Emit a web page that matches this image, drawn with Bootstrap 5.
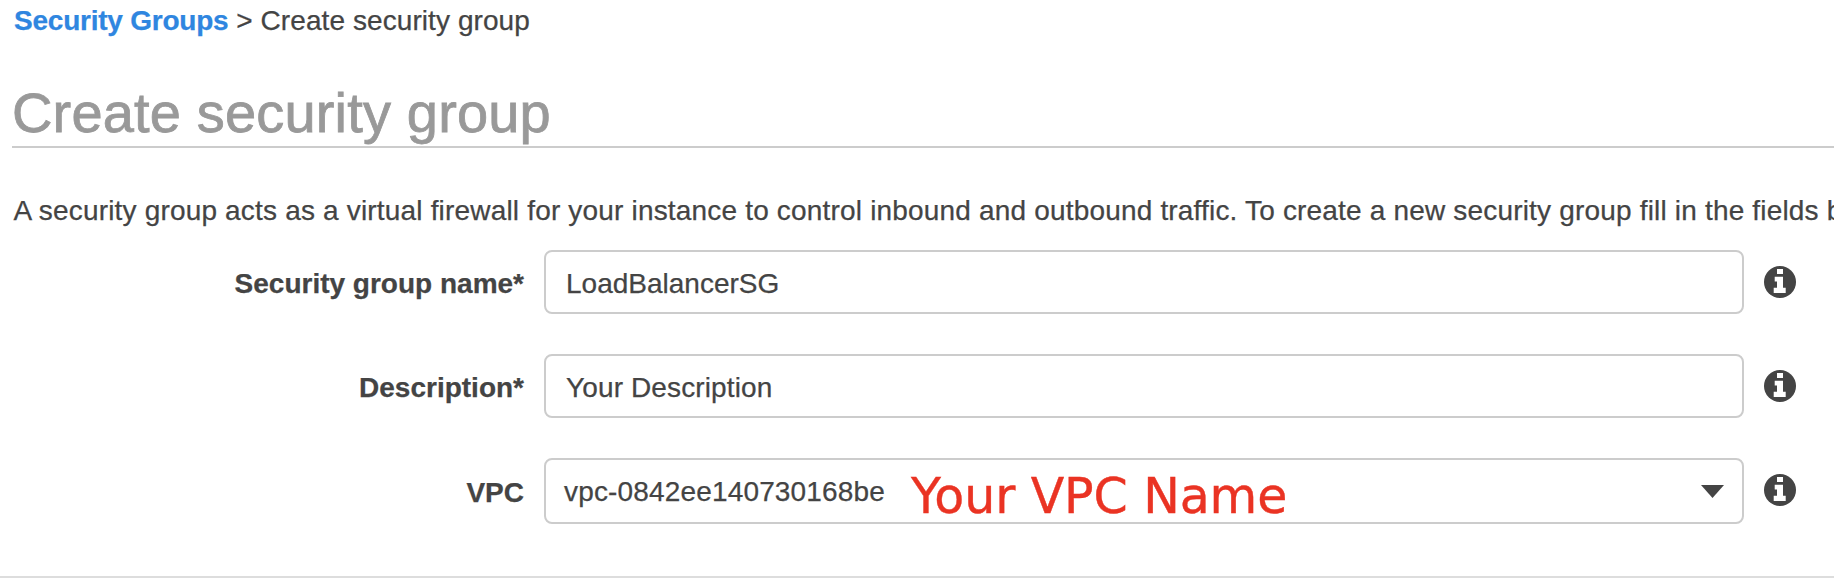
<!DOCTYPE html>
<html lang="en">
<head>
<meta charset="utf-8">
<meta name="viewport" content="width=device-width, initial-scale=1">
<title>Create security group</title>
<link href="https://cdn.jsdelivr.net/npm/bootstrap@5.3.0/dist/css/bootstrap.min.css" rel="stylesheet">
<style>
body{font-family:"Liberation Sans",Arial,sans-serif;font-size:28px;line-height:32px;color:#444;background:#fff;overflow:hidden;-webkit-text-stroke:.25px}
.page{height:578px;border-bottom:2px solid #ddd;padding-left:12px}
.crumbs{padding:5px 0 0 2px;height:76px;white-space:nowrap;letter-spacing:.08px}
.crumbs a{color:#2f86e0;letter-spacing:-.23px}
.title{height:72px;font-size:56px;line-height:64px;padding-top:5px;color:#999;border-bottom:2px solid #ccc;letter-spacing:.17px;-webkit-text-stroke:.8px}
.intro{height:102px;padding:47px 0 0 1.5px;white-space:nowrap;letter-spacing:.18px}
.fields{display:grid;gap:40px}
.field-row{display:grid;grid-template-columns:512px 1200px 32px;column-gap:20px;align-items:center}
.field-name{padding-top:3px;font-weight:700;text-align:right}
.form-control,.form-control:focus{height:64px;border:2px solid #ccc;border-radius:8px;padding:3px 20px 0;font-size:28px;line-height:32px;color:#444;box-shadow:none}
#desc{letter-spacing:.13px}
.vpc-box.form-control{height:66px;padding:1px 18px}
.vpc-id{letter-spacing:.16px;padding-top:1px}
.note{font-family:"DejaVu Sans",Verdana,sans-serif;font-size:49px;line-height:50px;color:#ea3323;letter-spacing:-.1px;padding-top:12px;margin-left:26px;-webkit-text-stroke:.4px}
.vpc-info{margin-bottom:2px}
svg{display:block}
</style>
</head>
<body>
<svg class="d-none">
  <symbol id="info" viewBox="0 0 32 32"><circle cx="16" cy="16" r="16" fill="#444"/><path fill="#fff" d="M13 3h6v5h-6zM10.700 10.700h8.300v11h2.700v5.300h-12v-5.300h3.300v-6.300h-2.300z"/></symbol>
</svg>
<main class="page">
  <nav class="crumbs"><a href="#" class="fw-bold text-decoration-none">Security Groups</a> &gt; Create security group</nav>
  <h1 class="title fw-normal m-0">Create security group</h1>
  <p class="intro m-0 overflow-hidden">A security group acts as a virtual firewall for your instance to control inbound and outbound traffic. To create a new security group fill in the fields below.</p>
  <form class="fields">
    <div class="field-row">
      <label class="field-name" for="name">Security group name*</label>
      <input class="form-control" id="name" value="LoadBalancerSG">
      <svg width="32" height="32"><use href="#info"/></svg>
    </div>
    <div class="field-row">
      <label class="field-name" for="desc">Description*</label>
      <input class="form-control" id="desc" value="Your Description">
      <svg width="32" height="32"><use href="#info"/></svg>
    </div>
    <div class="field-row">
      <span class="field-name">VPC</span>
      <div class="form-control vpc-box d-flex align-items-center">
        <span class="vpc-id">vpc-0842ee140730168be</span>
        <span class="note">Your VPC Name</span>
        <svg class="ms-auto" width="23" height="13" viewBox="0 0 23 13"><path fill="#444" d="M0 0h23L11.500 13z"/></svg>
      </div>
      <svg class="vpc-info" width="32" height="32"><use href="#info"/></svg>
    </div>
  </form>
</main>
<script src="https://cdn.jsdelivr.net/npm/bootstrap@5.3.0/dist/js/bootstrap.bundle.min.js"></script>
</body>
</html>
